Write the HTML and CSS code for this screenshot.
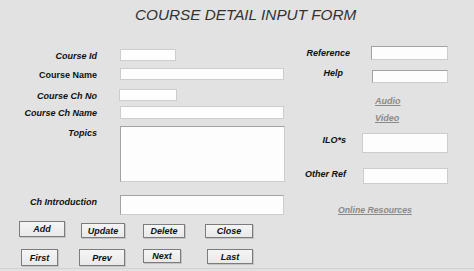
FILE: index.html
```html
<!DOCTYPE html>
<html>
<head>
<meta charset="utf-8">
<link rel="stylesheet" href="styles.css">
</head>
<body>
<div class="page">
  <h1 class="title">COURSE DETAIL INPUT FORM</h1>
  <div class="form">
    <div class="left">
      <div class="row r1"><span class="label">Course Id</span><span class="field f-id"></span></div>
      <div class="row r2"><span class="label plain">Course Name</span><span class="field f-wide"></span></div>
      <div class="row r3"><span class="label">Course Ch No</span><span class="field f-chno"></span></div>
      <div class="row r4"><span class="label">Course Ch Name</span><span class="field f-wide f-chname"></span></div>
      <div class="row r5"><span class="label">Topics</span><span class="field inset f-topics"></span></div>
      <div class="row r6"><span class="label">Ch Introduction</span><span class="field inset f-intro"></span></div>
      <div class="btnrow b1">
        <span class="btn add">Add</span>
        <span class="btn update">Update</span>
        <span class="btn delete">Delete</span>
        <span class="btn close">Close</span>
      </div>
      <div class="btnrow b2">
        <span class="btn first">First</span>
        <span class="btn prev">Prev</span>
        <span class="btn next">Next</span>
        <span class="btn last">Last</span>
      </div>
    </div>
    <div class="right">
      <div class="row rr-ref"><span class="label">Reference</span><span class="field inset"></span></div>
      <div class="row rr-help"><span class="label">Help</span><span class="field inset"></span></div>
      <a class="link l-audio">Audio</a>
      <a class="link l-video">Video</a>
      <div class="row rr-ilo"><span class="label">ILO*s</span><span class="field"></span></div>
      <div class="row rr-other"><span class="label">Other Ref</span><span class="field"></span></div>
      <a class="link l-online">Online Resources</a>
    </div>
  </div>
</div>
</body>
</html>
```
FILE: styles.css
```css
* { box-sizing: border-box; }
html, body { margin: 0; padding: 0; }
body {
  background: #e2e2e2;
  font-family: "Liberation Sans", Arial, sans-serif;
  width: 474px;
  height: 271px;
  overflow: hidden;
}
.page {
  width: 474px;
  height: 271px;
  border-bottom: 1px solid #d2d2d2;
  height: 269px;
}
.title {
  margin: 0;
  padding: 7px 0 0 135px;
  font-size: 15.3px;
  line-height: 16px;
  font-weight: normal;
  font-style: italic;
  color: #333;
  white-space: nowrap;
}
.form { display: flex; align-items: flex-start; }
.left { width: 284px; display: flex; flex-direction: column; }
.right { margin-left: 16px; display: flex; flex-direction: column; align-items: flex-start; }

.row { display: flex; align-items: flex-start; }
.label {
  font-size: 9px;
  font-weight: bold;
  font-style: italic;
  color: #111;
  line-height: 12px;
  padding-top: 1px;
  text-align: right;
  white-space: nowrap;
  flex: none;
}
.label.plain { font-style: normal; }
.left .label { width: 97px; }
.left .field { margin-left: 23px; }

.field {
  display: block;
  flex: none;
  background: #fdfdfd;
  border: 1px solid #cdcdcd;
}
.field.inset { border-top-color: #a2a2a2; border-left-color: #a2a2a2; }

.r1 { margin-top: 26px; }
.r2 { margin-top: 6px; }
.r3 { margin-top: 8px; }
.r4 { margin-top: 4px; }
.r5 { margin-top: 7px; }
.r6 { margin-top: 13px; }
.f-id { width: 56px; height: 12px; }
.f-wide { width: 164px; height: 12px; }
.f-chno { width: 58px; height: 12px; margin-left: 22px !important; }
.f-chname { height: 13px; }
.f-topics { width: 165px; height: 56px; }
.f-intro { width: 164px; height: 20px; }

.btnrow { display: flex; align-items: flex-start; }
.b1 { margin-top: 6px; }
.b2 { margin-top: 11px; }
.btn {
  display: flex;
  align-items: center;
  justify-content: center;
  flex: none;
  font-size: 9px;
  font-weight: bold;
  font-style: italic;
  color: #111;
  background: linear-gradient(#f5f5f5, #e9e9e9);
  border: 1px solid #7c7c7c;
  box-shadow: 1px 1px 0 #c4c4c4;
}
.add { width: 46px; height: 16px; margin-left: 19px; }
.update { width: 44px; height: 15px; margin-left: 16px; margin-top: 2px; }
.delete { width: 42px; height: 14px; margin-left: 18px; margin-top: 3px; }
.close { width: 48px; height: 14px; margin-left: 20px; margin-top: 3px; }
.first { width: 37px; height: 17px; margin-left: 21px; }
.prev { width: 46px; height: 17px; margin-left: 21px; }
.next { width: 38px; height: 14px; margin-left: 18px; }
.last { width: 46px; height: 15px; margin-left: 26px; }

.rr-ref { margin-top: 23px; }
.rr-ref .label { width: 50px; }
.rr-ref .field { margin-left: 21px; width: 77px; height: 14px; }
.rr-help { margin-top: 10px; }
.rr-help .label { width: 43px; padding-top: 0; margin-top: -3px; }
.rr-help .field { margin-left: 29px; width: 76px; height: 13px; }
.rr-ilo { margin-top: 9px; }
.rr-ilo .label { width: 46px; }
.rr-ilo .field { margin-left: 16px; width: 86px; height: 20px; }
.rr-other { margin-top: 15px; }
.rr-other .label { width: 46px; padding-top: 0; }
.rr-other .field { margin-left: 17px; width: 85px; height: 16px; }

.link {
  display: block;
  font-size: 9px;
  font-weight: bold;
  font-style: italic;
  line-height: 12px;
  color: #8a8a8a;
  text-decoration: underline;
  white-space: nowrap;
}
.l-audio { margin-left: 75px; margin-top: 12px; }
.l-video { margin-left: 75px; margin-top: 5px; }
.l-online { margin-left: 38px; margin-top: 20px; font-size: 8.7px; }
```
